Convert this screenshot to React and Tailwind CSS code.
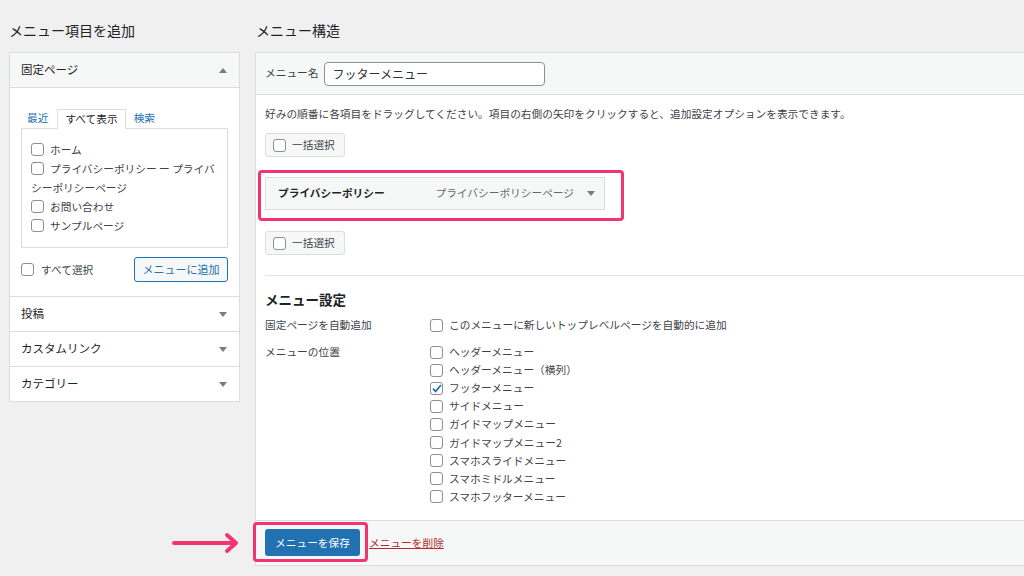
import React from 'react';

const Caret = ({ up = false, className = '' }) => (
  <svg width="8" height="5" viewBox="0 0 8 5" className={className}>
    <path d={up ? 'M0 5h8L4 0z' : 'M0 0h8L4 5z'} fill="#787c82" />
  </svg>
);

const Box = ({ checked = false, className = '' }) => (
  <span
    className={`inline-flex w-[13px] h-[13px] shrink-0 items-center justify-center rounded-[3px] border border-[#8c8f94] bg-white align-[-2px] ${className}`}
  >
    {checked && (
      <svg width="10" height="9" viewBox="0 0 10 9">
        <path d="M1 4.6l2.6 2.8L9 1" fill="none" stroke="#2271b1" strokeWidth="1.7" />
      </svg>
    )}
  </span>
);

const pages = ['ホーム', 'プライバシーポリシー ー プライバ\nシーポリシーページ', 'お問い合わせ', 'サンプルページ'];
const sections = ['投稿', 'カスタムリンク', 'カテゴリー'];
const locations = [
  { label: 'ヘッダーメニュー' },
  { label: 'ヘッダーメニュー（横列）' },
  { label: 'フッターメニュー', checked: true },
  { label: 'サイドメニュー' },
  { label: 'ガイドマップメニュー' },
  { label: 'ガイドマップメニュー2' },
  { label: 'スマホスライドメニュー' },
  { label: 'スマホミドルメニュー' },
  { label: 'スマホフッターメニュー' },
];

function BulkSelect() {
  return (
    <div className="flex h-[24px] w-[80px] items-center rounded-[3px] border border-[#dcdcde] bg-[#f6f7f7] pl-[7px]">
      <Box />
      <span className="ml-[6px] text-[10.7px] text-[#3c434a]">一括選択</span>
    </div>
  );
}

export default function App() {
  return (
    <div
      className="flex h-[576px] w-[1024px] overflow-hidden bg-[#f0f0f1] text-[#3c434a]"
      style={{ fontFamily: '"Noto Sans CJK JP", "Noto Sans", sans-serif' }}
    >
      {/* left column */}
      <div className="ml-[9px] w-[231px] shrink-0">
        <h2 className="pt-[21px] text-[14px] leading-[18px] text-[#1d2327]">メニュー項目を追加</h2>
        <div className="mt-[13px] border border-[#dcdcde] bg-white">
          <div className="flex h-[35px] items-center justify-between border-b border-[#dcdcde] bg-[#f6f7f7] pl-[11px] pr-[12px]">
            <span className="text-[11.5px] text-[#1d2327]">固定ページ</span>
            <Caret up />
          </div>
          <div className="px-[11px] pt-[21px] pb-[14px]">
            <div className="flex items-end text-[10.7px]">
              <span className="px-[6px] pb-[2px] text-[#2271b1]">最近</span>
              <span className="relative z-10 -mb-px ml-[3px] border border-b-0 border-[#dcdcde] bg-white px-[7px] pt-[1px] pb-[2px] text-[#1d2327]">
                すべて表示
              </span>
              <span className="pl-[8px] pb-[2px] text-[#2271b1]">検索</span>
            </div>
            <div className="h-[120px] whitespace-pre-line border border-[#dcdcde] px-[9px] pt-[11px] text-[10.7px] leading-[19px]">
              {pages.map((p) => (
                <div key={p}>
                  <Box className="mr-[6px]" />
                  {p}
                </div>
              ))}
            </div>
            <div className="mt-[9px] flex items-center justify-between">
              <div className="flex items-center text-[10.7px]">
                <Box />
                <span className="ml-[7px]">すべて選択</span>
              </div>
              <div className="flex h-[25px] w-[94px] items-center justify-center rounded-[3px] border border-[#2271b1] bg-[#f6f7f7] text-[11px] text-[#2271b1]">
                メニューに追加
              </div>
            </div>
          </div>
          {sections.map((s) => (
            <div
              key={s}
              className="flex h-[35px] items-center justify-between border-t border-[#dcdcde] pl-[11px] pr-[12px]"
            >
              <span className="text-[11.5px] text-[#1d2327]">{s}</span>
              <Caret />
            </div>
          ))}
        </div>
      </div>

      {/* right column */}
      <div className="ml-[15px] w-[800px] shrink-0">
        <h2 className="pt-[21px] pl-px text-[14px] leading-[18px] text-[#1d2327]">メニュー構造</h2>
        <div className="mt-[13px] border border-[#dcdcde] bg-white">
          <div className="flex h-[42px] items-center border-b border-[#dcdcde] bg-[#f6f7f7] px-[9px]">
            <span className="text-[10.7px]">メニュー名</span>
            <div className="ml-[6px] flex h-[24px] w-[221px] items-center rounded-[4px] border border-[#8c8f94] bg-white px-[7px] text-[12px] text-[#2c3338]">
              フッターメニュー
            </div>
          </div>

          <div className="px-[9px] pt-[11px]">
            <p className="text-[10.7px] leading-[16px]">
              好みの順番に各項目をドラッグしてください。項目の右側の矢印をクリックすると、追加設定オプションを表示できます。
            </p>
            <div className="mt-[11px]">
              <BulkSelect />
            </div>

            <div className="relative mt-[20px] w-[340px]">
              <div className="pointer-events-none absolute -top-[7px] -left-[7px] -right-[19px] -bottom-[11px] rounded-[4px] border-[3px] border-[#f2346f]" />
              <div className="flex h-[33px] items-center justify-between border border-[#dcdcde] bg-[#f6f7f7] pl-[12px] pr-[9px]">
                <span className="text-[10.7px] font-bold text-[#1d2327]">プライバシーポリシー</span>
                <div className="flex items-center">
                  <span className="text-[10.7px] text-[#646970]">プライバシーポリシーページ</span>
                  <Caret className="ml-[13px]" />
                </div>
              </div>
            </div>

            <div className="mt-[21px]">
              <BulkSelect />
            </div>

            <div className="mt-[20px] border-t border-[#e4e4e6] pt-[13px] pb-[14px]">
              <h3 className="text-[13.5px] font-semibold leading-[20px] text-[#1d2327]">メニュー設定</h3>
              <div className="mt-[7px] flex text-[10.7px] leading-[18px]">
                <span className="w-[165px]">固定ページを自動追加</span>
                <div className="flex items-center">
                  <Box />
                  <span className="ml-[6px]">このメニューに新しいトップレベルページを自動的に追加</span>
                </div>
              </div>
              <div className="mt-[9px] flex text-[10.7px] leading-[18px]">
                <span className="w-[165px]">メニューの位置</span>
                <div className="flex flex-col">
                  {locations.map((l) => (
                    <div key={l.label} className="flex h-[18.1px] items-center">
                      <Box checked={l.checked} />
                      <span className="ml-[6px]">{l.label}</span>
                    </div>
                  ))}
                </div>
              </div>
            </div>
          </div>

          <div className="flex h-[45px] items-center border-t border-[#dcdcde] bg-[#f6f7f7] px-[9px]">
            <div className="relative">
              <svg
                width="70"
                height="22"
                viewBox="0 0 70 22"
                className="absolute top-1/2 -left-[93px] -translate-y-1/2"
              >
                <path d="M2 11h62M55 3l9 8-9 8" fill="none" stroke="#f2346f" strokeWidth="4" strokeLinecap="round" strokeLinejoin="round" />
              </svg>
              <div className="pointer-events-none absolute -top-[7px] -left-[12px] -right-[8px] -bottom-[6px] rounded-[4px] border-[3px] border-[#f2346f]" />
              <div className="flex h-[27px] w-[95px] items-center justify-center rounded-[3px] bg-[#2271b1] text-[10.7px] text-white">
                メニューを保存
              </div>
            </div>
            <span className="ml-[9px] text-[10.7px] text-[#b32d2e] underline">メニューを削除</span>
          </div>
        </div>
      </div>
    </div>
  );
}
